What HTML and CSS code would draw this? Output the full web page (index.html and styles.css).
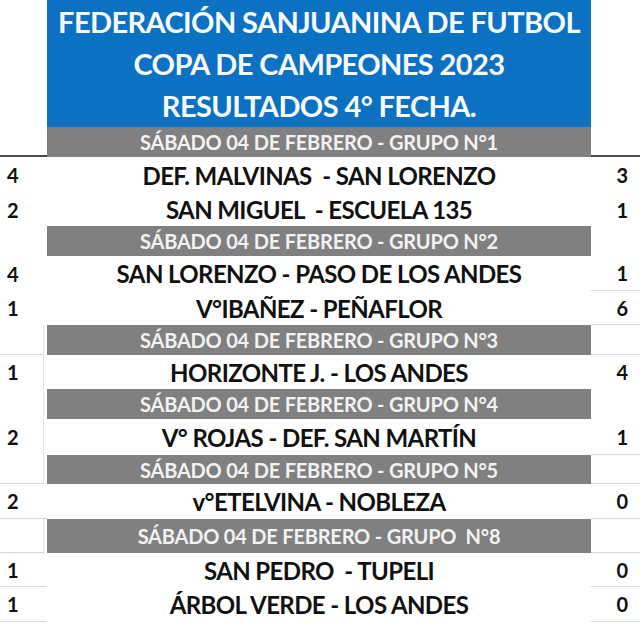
FILE: index.html
```html
<!DOCTYPE html>
<html lang="es">
<head>
<meta charset="utf-8">
<title>Copa de Campeones 2023</title>
<link rel="stylesheet" href="styles.css">
</head>
<body>
<div class="sheet">
  <div class="side"></div>
  <div class="title">
    <div>FEDERACIÓN SANJUANINA DE FUTBOL</div>
    <div>COPA DE CAMPEONES 2023</div>
    <div>RESULTADOS 4° FECHA.</div>
  </div>
  <div class="side"></div>

  <div class="side dark"></div>
  <div class="group">SÁBADO 04 DE FEBRERO - GRUPO N°1</div>
  <div class="side dark"></div>

  <div class="score l">4</div>
  <div class="match">DEF. MALVINAS  - SAN LORENZO</div>
  <div class="score r">3</div>

  <div class="score l">2</div>
  <div class="match">SAN MIGUEL  - ESCUELA 135</div>
  <div class="score r">1</div>

  <div class="side"></div>
  <div class="group">SÁBADO 04 DE FEBRERO - GRUPO N°2</div>
  <div class="side"></div>

  <div class="score l">4</div>
  <div class="match">SAN LORENZO - PASO DE LOS ANDES</div>
  <div class="score r line">1</div>

  <div class="score l">1</div>
  <div class="match">V°IBAÑEZ - PEÑAFLOR</div>
  <div class="score r line">6</div>

  <div class="side line vline"></div>
  <div class="group">SÁBADO 04 DE FEBRERO - GRUPO N°3</div>
  <div class="side line"></div>

  <div class="score l vline">1</div>
  <div class="match">HORIZONTE J. - LOS ANDES</div>
  <div class="score r">4</div>

  <div class="side vline"></div>
  <div class="group">SÁBADO 04 DE FEBRERO - GRUPO N°4</div>
  <div class="side"></div>

  <div class="score l vline">2</div>
  <div class="match">V° ROJAS - DEF. SAN MARTÍN</div>
  <div class="score r line">1</div>

  <div class="side line vline"></div>
  <div class="group">SÁBADO 04 DE FEBRERO - GRUPO N°5</div>
  <div class="side line"></div>

  <div class="score l line">2</div>
  <div class="match">v°ETELVINA - NOBLEZA</div>
  <div class="score r line">0</div>

  <div class="side line vline"></div>
  <div class="group">SÁBADO 04 DE FEBRERO - GRUPO  N°8</div>
  <div class="side line"></div>

  <div class="score l line">1</div>
  <div class="match">SAN PEDRO  - TUPELI</div>
  <div class="score r line">0</div>

  <div class="score l line">1</div>
  <div class="match">ÁRBOL VERDE - LOS ANDES</div>
  <div class="score r line">0</div>
</div>
</body>
</html>
```

FILE: styles.css
```css
html, body {
  margin: 0;
  padding: 0;
  background: #ffffff;
}

body {
  font-family: Lato, "Open Sans", "DejaVu Sans", sans-serif;
  font-weight: 700;
  color: #111111;
}

.sheet {
  display: grid;
  grid-template-columns: 47px 544px 49px;
  grid-template-rows: 127px 30px 36px 33px 30px 35px 34px 30px 34px 30px 36px 29px 35px 34px 34px 35px;
  width: 640px;
}

.side,
.score {
  box-sizing: border-box;
}

.title {
  background: #0d71c3;
  color: #f7fbff;
  font-size: 29px;
  line-height: 42px;
  text-align: center;
  padding-top: 1px;
  letter-spacing: -0.6px;
  white-space: nowrap;
}

.group {
  background: #808080;
  color: #f2f2f2;
  font-size: 20px;
  display: flex;
  align-items: center;
  justify-content: center;
  white-space: pre;
  letter-spacing: -0.2px;
}

.match {
  font-size: 24px;
  display: flex;
  align-items: center;
  justify-content: center;
  white-space: pre;
  letter-spacing: -0.6px;
}

.score {
  font-size: 20px;
  display: flex;
  align-items: center;
}

.score.l {
  padding-left: 7px;
}

.score.r {
  justify-content: flex-end;
  padding-right: 12px;
}

.line {
  border-bottom: 1px solid #d6d6d6;
}

.dark {
  border-bottom: 2px solid #4a4a4a;
}

.vline {
  border-right: 1px solid #e6e6e6;
  margin-right: 3px;
}
```
